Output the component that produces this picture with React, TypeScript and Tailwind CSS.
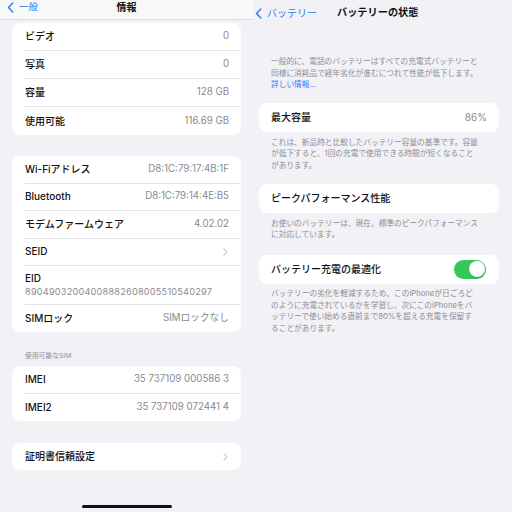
import React from "react";

const FONT = "font-['Inter','Noto_Sans_CJK_JP',sans-serif]";

function Chevron({ className }: { className?: string }) {
  return (
    <svg viewBox="0 0 6 10" className={className} fill="none">
      <polyline points="1,1 5,5 1,9" stroke="currentColor" strokeWidth="1.3" strokeLinecap="round" strokeLinejoin="round" />
    </svg>
  );
}

function BackChevron({ className }: { className?: string }) {
  return (
    <svg viewBox="0 0 7 12" className={className} fill="none">
      <polyline points="6,1 1.3,6 6,11" stroke="currentColor" strokeWidth="1.6" strokeLinecap="round" strokeLinejoin="round" />
    </svg>
  );
}

function Row({
  label,
  value,
  last,
  chevron,
  h = "h-[28px]",
}: {
  label: string;
  value?: string;
  last?: boolean;
  chevron?: boolean;
  h?: string;
}) {
  return (
    <div className={`flex items-center justify-between pr-[12px] ml-[13px] ${h} ${last ? "" : "border-b border-[#e4e4e8]"}`}>
      <span className="text-[10px] font-medium text-[#111]">{label}</span>
      {value && <span className="text-[9.7px] text-[#8a8a8e]">{value}</span>}
      {chevron && <Chevron className="w-[5px] h-[8px] text-[#c4c4c8] mr-[1px]" />}
    </div>
  );
}

function Footnote({ lines, className = "" }: { lines: React.ReactNode[]; className?: string }) {
  return (
    <div className={`px-[12px] text-[7.7px] leading-[11.5px] text-[#8e8e93] whitespace-nowrap ${className}`}>
      {lines.map((l, i) => (
        <div key={i}>{l}</div>
      ))}
    </div>
  );
}

function InfoPanel() {
  return (
    <div className="w-[253px] h-full flex flex-col bg-[#f1f1f6]">
      {/* Nav bar (scrolled, partly cut at top) */}
      <div className="h-[20px] flex-shrink-0 relative bg-[#f8f8f8] border-b border-[#dcdce0]">
        <div className="absolute left-[7px] top-0 flex items-center gap-[5px] h-[14px] text-[#2f7cf6]">
          <BackChevron className="w-[7px] h-[11px]" />
          <span className="text-[9.5px]">一般</span>
        </div>
        <div className="h-[14px] flex items-center justify-center">
          <span className="text-[10px] font-semibold text-[#111]">情報</span>
        </div>
      </div>

      <div className="px-[12px] pt-[3px] flex flex-col">
        <div className="bg-white rounded-[8px]">
          <Row label="ビデオ" value="0" />
          <Row label="写真" value="0" />
          <Row label="容量" value="128 GB" />
          <Row label="使用可能" value="116.69 GB" last />
        </div>

        <div className="bg-white rounded-[8px] mt-[21px]">
          <Row label="Wi-Fiアドレス" value="D8:1C:79:17:4B:1F" h="h-[27.5px]" />
          <Row label="Bluetooth" value="D8:1C:79:14:4E:B5" h="h-[27.5px]" />
          <Row label="モデムファームウェア" value="4.02.02" h="h-[27.5px]" />
          <Row label="SEID" chevron h="h-[27.5px]" />
          <div className="ml-[13px] pr-[12px] h-[39px] flex flex-col justify-center border-b border-[#e4e4e8]">
            <span className="text-[10px] font-medium text-[#111] leading-[14px]">EID</span>
            <span className="text-[9.2px] text-[#8a8a8e] leading-[14px] tracking-[0.2px]">
              89049032004008882608005510540297
            </span>
          </div>
          <Row label="SIMロック" value="SIMロックなし" h="h-[27px]" last />
        </div>

        <div className="mt-[19px] mb-[5px] pl-[13px] h-[10px] flex items-center text-[6.8px] text-[#8e8e93]">
          使用可能なSIM
        </div>
        <div className="bg-white rounded-[8px]">
          <Row label="IMEI" value="35 737109 000586 3" h="h-[27.5px]" />
          <Row label="IMEI2" value="35 737109 072441 4" h="h-[27.5px]" last />
        </div>

        <div className="bg-white rounded-[8px] mt-[22px]">
          <Row label="証明書信頼設定" chevron h="h-[27px]" last />
        </div>
      </div>

      <div className="mt-auto mb-[4px] flex justify-center">
        <div className="w-[90px] h-[3.5px] rounded-full bg-[#111] ml-[1px]" />
      </div>
    </div>
  );
}

function Toggle() {
  return (
    <div className="w-[32px] h-[19px] rounded-full bg-[#34c759] flex items-center justify-end pr-[1.5px]">
      <div className="w-[16px] h-[16px] rounded-full bg-white shadow-[0_1px_2px_rgba(0,0,0,0.2)]" />
    </div>
  );
}

function BatteryPanel() {
  return (
    <div className="flex-1 h-full bg-[#f1f1f6] flex flex-col">
      <div className="h-[26px] flex items-center">
        <div className="flex items-center gap-[5px] pl-[2px] text-[#2f7cf6]">
          <BackChevron className="w-[7px] h-[11px]" />
          <span className="text-[10px]">バッテリー</span>
        </div>
        <span className="ml-[20px] text-[10.2px] font-semibold text-[#111]">バッテリーの状態</span>
      </div>

      <div className="pl-[6px] pr-[13px] flex flex-col">
        <Footnote
          className="pt-[30px] pb-[12.5px]"
          lines={[
            "一般的に、電話のバッテリーはすべての充電式バッテリーと",
            "同様に消耗品で経年劣化が進むにつれて性能が低下します。",
            <span className="text-[#2f7cf6]">詳しい情報...</span>,
          ]}
        />

        <div className="bg-white rounded-[8px] h-[29px] px-[12px] flex items-center justify-between">
          <span className="text-[10px] font-medium text-[#111]">最大容量</span>
          <span className="text-[10px] text-[#8a8a8e]">86%</span>
        </div>
        <Footnote
          className="pt-[4.5px] pb-[13px]"
          lines={[
            "これは、新品時と比較したバッテリー容量の基準です。容量",
            "が低下すると、1回の充電で使用できる時間が短くなること",
            "があります。",
          ]}
        />

        <div className="bg-white rounded-[8px] h-[29px] px-[12px] flex items-center">
          <span className="text-[10px] font-medium text-[#111]">ピークパフォーマンス性能</span>
        </div>
        <Footnote
          className="pt-[4.5px] pb-[14px]"
          lines={["お使いのバッテリーは、現在、標準のピークパフォーマンス", "に対応しています。"]}
        />

        <div className="bg-white rounded-[8px] h-[29px] pl-[12px] pr-[13px] flex items-center justify-between">
          <span className="text-[10px] font-medium text-[#111]">バッテリー充電の最適化</span>
          <Toggle />
        </div>
        <Footnote
          className="pt-[4.5px]"
          lines={[
            "バッテリーの劣化を軽減するため、このiPhoneが日ごろど",
            "のように充電されているかを学習し、次にこのiPhoneをバ",
            "ッテリーで使い始める直前まで80%を超える充電を保留す",
            "ることがあります。",
          ]}
        />
      </div>
    </div>
  );
}

export default function App() {
  return (
    <div className={`w-[512px] h-[512px] overflow-hidden flex ${FONT}`}>
      <InfoPanel />
      <BatteryPanel />
    </div>
  );
}
